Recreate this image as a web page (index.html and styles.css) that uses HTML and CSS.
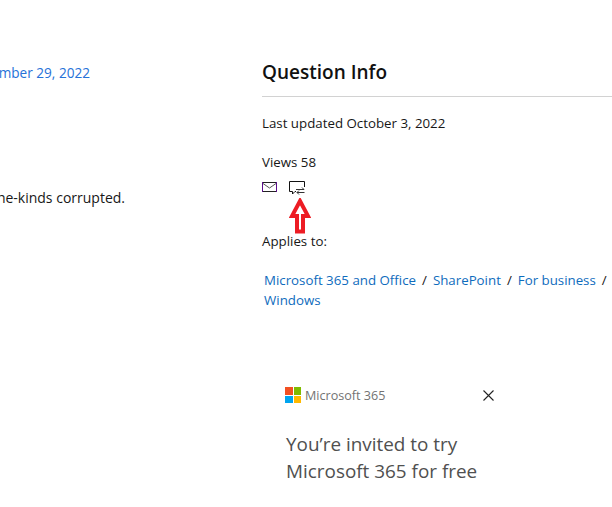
FILE: index.html
```html
<!DOCTYPE html>
<html lang="en">
<head>
    <meta charset="UTF-8">
    <meta name="viewport" content="width=device-width, initial-scale=1.0">
    <title>Question Info</title>
    <link rel="stylesheet" href="styles.css">
</head>
<body>
    <div class="page">
        <!-- Left column, cut off by the window edge -->
        <div class="thread">
            <div class="thread-row thread-date"><a href="#">November 29, 2022</a></div>
            <div class="thread-row thread-text">the-kinds corrupted.</div>
        </div>

        <div class="sidebar">
            <h2 class="info-title">Question Info</h2>
            <p class="info-updated">Last updated October 3, 2022</p>
            <p class="info-views">Views 58</p>

            <div class="info-icons">
                <svg class="icon-mail" width="16" height="11" viewBox="0 0 16 11">
                    <rect x="0.5" y="0.5" width="14" height="9" fill="#fff" stroke="#5c0f8b"/>
                    <path d="M1 0.5 H14 M1 9.5 H14" stroke="#222"/>
                    <path d="M1 1.5 L7.5 6 L14 1.5" fill="none" stroke="#555"/>
                </svg>
                <svg class="icon-reply" width="16" height="14" viewBox="0 0 16 14">
                    <path d="M0.5 0.5 H15.5 V10.5 H6 L3.5 13 V10.5 H0.5 Z" fill="#fff" stroke="#111"/>
                    <rect x="7" y="6" width="9" height="8" fill="#fff"/>
                    <path d="M7 8.5 H15 M13 6.5 L15 8.5 M15.5 11.5 H8 M10 9.5 L8 11.5 L10 13.5" fill="none" stroke="#333"/>
                </svg>
                <!-- Red arrow drawn on top of the screenshot -->
                <svg class="arrow" width="22" height="36" viewBox="0 0 22 36">
                    <path d="M11 3 L19 18 H14 V33.5 H8 V18 H3 Z" fill="#fff" stroke="#ed1c24" stroke-width="4"/>
                </svg>
            </div>

            <p class="info-applies">Applies to:</p>

            <div class="tags">
                <span class="tag"><a href="#">Microsoft 365 and Office</a><span class="sep">/</span></span>
                <span class="tag"><a href="#">SharePoint</a><span class="sep">/</span></span>
                <span class="tag"><a href="#">For business</a><span class="sep">/</span></span>
                <span class="tag"><a href="#">Windows</a></span>
            </div>

            <div class="promo">
                <div class="promo-head">
                    <div class="brand">
                        <span class="logo">
                            <i class="logo-red"></i><i class="logo-green"></i>
                            <i class="logo-blue"></i><i class="logo-yellow"></i>
                        </span>
                        <span class="brand-name">Microsoft 365</span>
                    </div>
                    <svg class="close" width="11" height="11" viewBox="0 0 11 11">
                        <path d="M0.5 0.5 L10.5 10.5 M10.5 0.5 L0.5 10.5" stroke="#222" stroke-width="1.1"/>
                    </svg>
                </div>
                <p class="promo-text">You’re invited to try<br>Microsoft 365 for free</p>
            </div>
        </div>
    </div>
</body>
</html>
```

FILE: styles.css
```css
html, body {
    margin: 0;
    height: 100%;
    overflow: hidden;
    background: #fff;
}
body {
    font-family: "Open Sans", "Noto Sans", Arial, sans-serif;
    font-size: 14px;
    color: #171717;
}
a {
    color: #0f6cbd;
    text-decoration: none;
}
p {
    margin: 0;
}
.page {
    display: grid;
    grid-template-columns: 262px 1fr;
    width: 612px;
    height: 507px;
    overflow: hidden;
}

/* left column */
.thread {
    overflow: hidden;
    padding-top: 63px;
}
.thread-row {
    display: flex;
    justify-content: flex-end;
    white-space: nowrap;
    line-height: 20px;
}
.thread-date {
    padding-right: 172px;
    font-size: 13.6px;
}
.thread-date a {
    color: #2672d8;
}
.thread-text {
    margin-top: 105px;
    padding-right: 137px;
    font-size: 14px;
}

/* right column */
.sidebar {
    min-width: 0;
    padding-top: 59px;
}
.info-title {
    margin: 0;
    padding-bottom: 11px;
    border-bottom: 1px solid #d2d2d2;
    font-size: 19px;
    font-weight: 600;
    line-height: 26px;
    color: #111;
}
.info-updated {
    margin-top: 16px;
    font-size: 13.3px;
    line-height: 20px;
}
.info-views {
    margin-top: 19px;
    font-size: 13.3px;
    line-height: 20px;
}
.info-icons {
    position: relative;
    display: flex;
    align-items: flex-start;
    gap: 11px;
    margin-top: 9px;
    height: 15px;
}
.icon-mail {
    margin-top: 1px;
}
.arrow {
    position: absolute;
    left: 27px;
    top: 17px;
}
.info-applies {
    margin-top: 35px;
    font-size: 13.3px;
    line-height: 20px;
}
.tags {
    display: flex;
    flex-wrap: wrap;
    column-gap: 6px;
    margin-top: 19px;
    padding-left: 2px;
    font-size: 13.3px;
    line-height: 20px;
}
.tag {
    white-space: nowrap;
}
.tag .sep {
    margin-left: 6px;
}
.promo {
    width: 212px;
    margin: 76px 0 0 23px;
}
.promo-head {
    display: flex;
    justify-content: space-between;
    align-items: center;
    height: 18px;
}
.brand {
    display: flex;
    align-items: center;
    gap: 4px;
}
.logo {
    display: grid;
    grid-template-columns: 7.5px 7.5px;
    grid-template-rows: 7.5px 7.5px;
    gap: 1px;
}
.logo i {
    display: block;
}
.logo-red { background: #f25022; }
.logo-green { background: #7fba00; }
.logo-blue { background: #00a4ef; }
.logo-yellow { background: #ffb900; }
.brand-name {
    font-size: 12.6px;
    font-weight: 500;
    color: #737373;
}
.close {
    margin-right: 3px;
}
.promo-text {
    margin: 27px 0 0 1px;
    font-size: 18.9px;
    line-height: 27px;
    color: #505050;
}
```
